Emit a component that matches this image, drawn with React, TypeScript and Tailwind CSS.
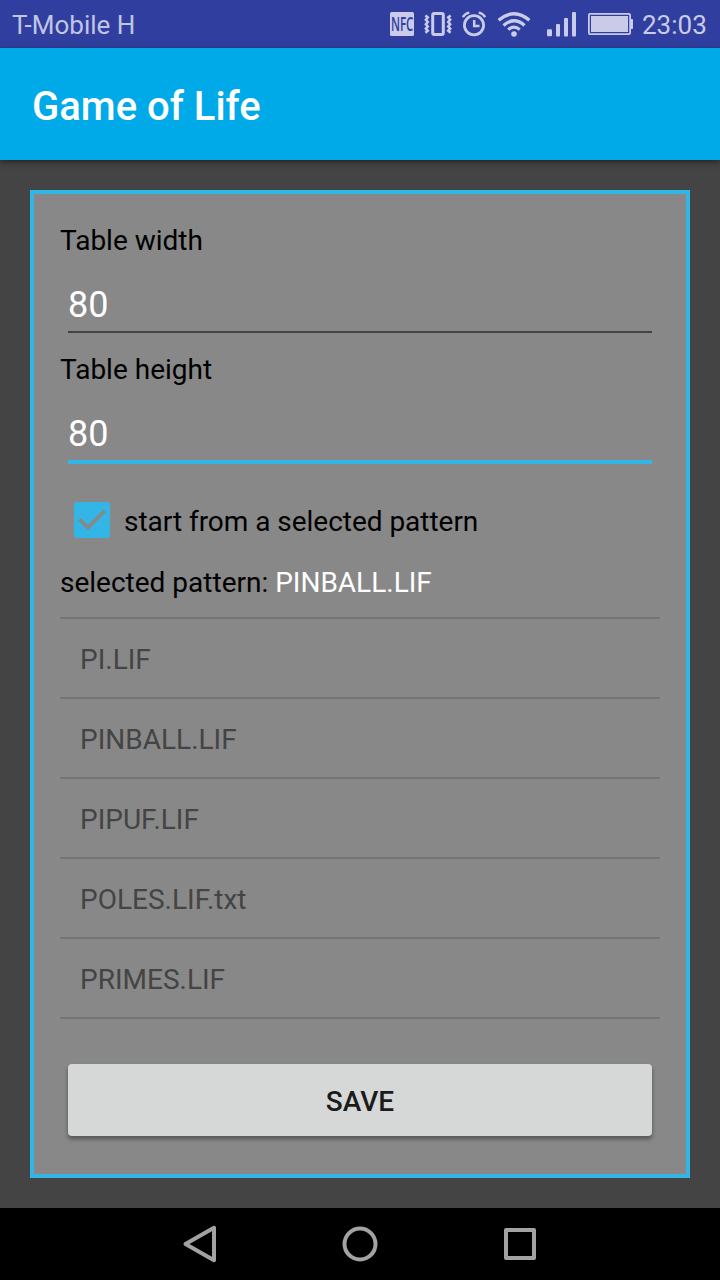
import React from "react";

const patterns = ["PI.LIF", "PINBALL.LIF", "PIPUF.LIF", "POLES.LIF.txt", "PRIMES.LIF"];

function StatusIcons() {
  return (
    <svg className="h-12 w-[252px]" viewBox="384 0 252 48" fill="none" stroke="#c9cbe8">
      <rect x="390" y="12" width="24" height="24" rx="1.5" fill="#c9cbe8" stroke="none" />
      <text
        x="391"
        y="31"
        textLength="22.4"
        lengthAdjust="spacingAndGlyphs"
        fill="#303f9f"
        stroke="none"
        className="font-['Open_Sans',sans-serif] text-[20px] font-semibold"
      >
        NFC
      </text>
      <rect x="432.7" y="13.5" width="10.6" height="21" rx="1.5" strokeWidth="3" />
      <path d="M425.4 15.5l2.4 2-2 2.3 2 2.2-2 2.2 2 2.2-2 2.3 2 2-2.4 2M450.6 15.5l-2.4 2 2 2.3-2 2.2 2 2.2-2 2.2 2 2.3-2 2 2.4 2" strokeWidth="2.5" />
      <circle cx="474" cy="25.3" r="9.6" strokeWidth="2.8" />
      <path d="M474.2 20V26H479.5" strokeWidth="2.5" />
      <path d="M462.8 17.2Q465 13.3 469.3 12.6M485.2 17.2Q483 13.3 478.7 12.6" strokeWidth="2.4" />
      <path d="M498.6 20.2Q514 7.3 529.4 20.2" strokeWidth="3.3" />
      <path d="M503.5 25.4Q514 16.2 524.5 25.4" strokeWidth="3.3" />
      <path d="M508.2 29.6Q514 24.5 519.8 29.6" strokeWidth="3.1" />
      <circle cx="514" cy="34" r="2.8" fill="#c9cbe8" stroke="none" />
      <g fill="#c9cbe8" stroke="none">
        <rect x="547" y="29.3" width="5" height="7" rx="1" />
        <rect x="556" y="24" width="4" height="12.5" rx="1" />
        <rect x="564" y="18" width="4" height="18.5" rx="1" />
        <rect x="572" y="12" width="4" height="24.5" rx="1" />
        <rect x="591" y="16" width="37" height="16" />
        <rect x="630" y="19" width="3" height="10" rx="0.8" />
      </g>
      <rect x="588.9" y="13.9" width="41.2" height="20.2" rx="1.2" strokeWidth="1.8" />
    </svg>
  );
}

function Field({ label, value, focused = false }: { label: string; value: string; focused?: boolean }) {
  return (
    <div>
      <div className="h-[38px] leading-[42px]">{label}</div>
      <div
        className={
          focused
            ? "mx-2 h-[77px] border-b-4 border-[#33b5e5] pt-[26px] text-[36px] leading-[42px] text-white"
            : "mx-2 h-[75px] border-b-2 border-[#434343] pt-[26px] text-[36px] leading-[42px] text-white"
        }
      >
        {value}
      </div>
    </div>
  );
}

export default function App() {
  return (
    <div className="flex h-[1280px] w-[720px] flex-col overflow-hidden bg-[#444444] font-['Roboto',sans-serif] text-[28px] text-black">
      <header className="flex h-12 shrink-0 items-center bg-[#303f9f] text-[26px] text-[#c1c5e2]">
        <span className="pl-3 pt-0.5 leading-[46px]">T-Mobile H</span>
        <div className="ml-auto flex items-center pr-3">
          <StatusIcons />
          <span className="w-[72px] whitespace-nowrap pl-1.5 pt-0.5 leading-[46px] text-[#c9cbe8]">23:03</span>
        </div>
      </header>

      <div className="flex h-28 shrink-0 items-center bg-[#00a9e7] pl-8 pt-1.5 text-[40px] font-medium text-white shadow-[0_2px_6px_rgba(0,0,0,0.5)]">
        Game of Life
      </div>

      <main className="mx-[30px] mt-[30px] flex h-[988px] shrink-0 flex-col border-4 border-[#33b5e5] bg-[#888888] px-[26px] pt-[26px]">
        <div className="flex flex-col gap-4">
          <Field label="Table width" value="80" />
          <Field label="Table height" value="80" focused />
        </div>

        <label className="mt-[38px] flex h-9 items-center pl-3.5">
          <svg className="size-9" viewBox="0 0 36 36" fill="none">
            <rect width="36" height="36" rx="3.5" fill="#33b5e5" />
            <path d="M5.4 17.2L14 25.6L30.8 8.8" stroke="#888888" strokeWidth="3.6" />
          </svg>
          <span className="pl-3.5 pt-1 tracking-[-0.03px] leading-9">start from a selected pattern</span>
        </label>

        <div className="mt-[25px] h-[38px] leading-[40px]">
          selected pattern: <span className="text-white">PINBALL.LIF</span>
        </div>

        <ul className="mt-4 border-t-2 border-[#747474] text-[#444444]">
          {patterns.map((name) => (
            <li key={name} className="h-20 border-b-2 border-[#747474] pl-5 leading-[82px]">
              {name}
            </li>
          ))}
        </ul>

        <button className="mx-2 mt-[45px] h-[72px] shrink-0 rounded-[4px] bg-[#d6d8d7] pt-1 leading-9 font-medium text-[#1b1b1b] shadow-[0_3px_4px_rgba(0,0,0,0.38)]">
          SAVE
        </button>
      </main>

      <nav className="mt-auto h-[72px] shrink-0 bg-black">
        <svg className="h-[72px] w-[720px]" viewBox="0 0 720 72" fill="none" stroke="#a3a3a3" strokeWidth="4" strokeLinejoin="round">
          <path d="M214 19.8V52.2L185.5 36Z" />
          <circle cx="360" cy="36" r="15.5" />
          <rect x="506" y="22" width="28" height="28" />
        </svg>
      </nav>
    </div>
  );
}
